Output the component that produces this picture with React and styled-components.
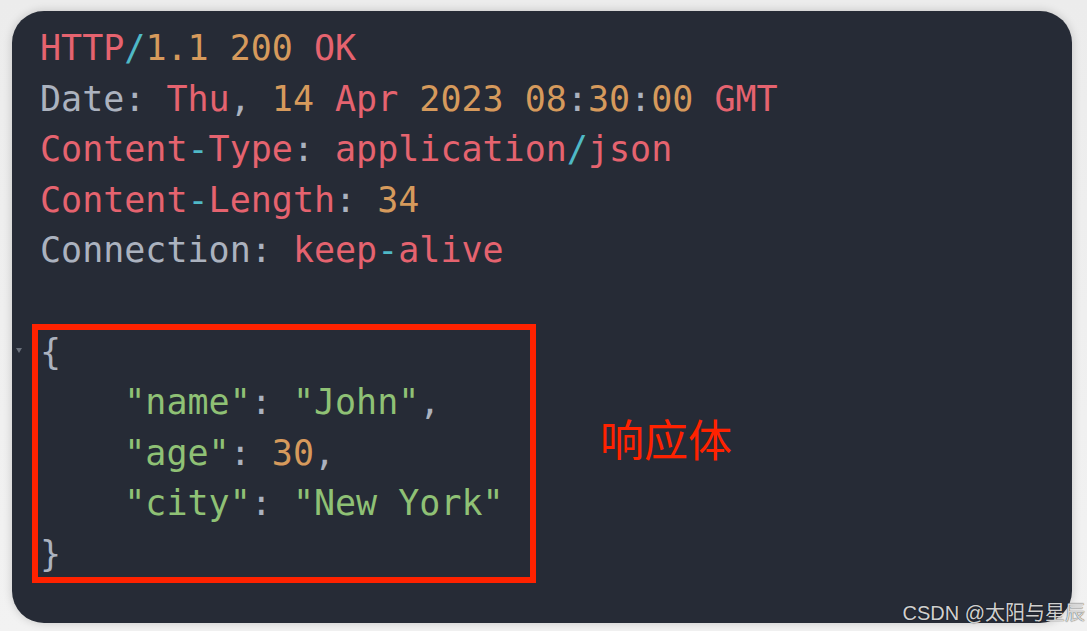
import React from 'react';
import styled, { createGlobalStyle } from 'styled-components';

const colors = {
  bg: '#262b36',
  red: '#e5636f',
  orange: '#d69a5c',
  cyan: '#4fb9c6',
  gray: '#abb2bf',
  green: '#8fc175',
  mark: '#ff2200',
};

const GlobalStyle = createGlobalStyle`
  html, body {
    margin: 0;
    padding: 0;
    background: #f0f0f0;
  }
  #root {
    width: 1087px;
    height: 631px;
    overflow: hidden;
  }
`;

const Page = styled.div`
  position: relative;
  width: 1087px;
  height: 631px;
  padding: 11px 15px 8px 12px;
  box-sizing: border-box;
  background: linear-gradient(to bottom, #ececec, #f2f2f2);
`;

const Panel = styled.div`
  height: 100%;
  box-sizing: border-box;
  padding: 12px 0 0 28px;
  background: ${colors.bg};
  border-radius: 32px;
  box-shadow: 0 0 10px rgba(0, 0, 0, 0.18);
  font-family: "DejaVu Sans Mono", "Liberation Mono", monospace;
  font-size: 35px;
  line-height: 50.6px;
  color: ${colors.gray};
`;

const Line = styled.div`
  height: 50.6px;
  white-space: pre;
`;

const Tok = styled.span`
  color: ${(p) => colors[p.c] || colors.gray};
`;

const BodyRow = styled.div`
  position: relative;
  display: flex;
  align-items: flex-start;
  gap: 64px;
  margin-left: -8px;
  margin-top: -3px;
`;

const BodyBox = styled.div`
  width: 504px;
  box-sizing: border-box;
  border: 6px solid ${colors.mark};
  padding-left: 2px;
`;

const BodyLines = styled.div`
  margin: -3px 0;
`;

const Fold = styled.div`
  position: absolute;
  left: -16px;
  top: 24px;
  width: 0;
  height: 0;
  border-left: 3px solid transparent;
  border-right: 3px solid transparent;
  border-top: 5px solid #6b717c;
`;

const Label = styled.div`
  margin-top: 89px;
  font-family: "Noto Sans CJK SC", "Noto Sans", sans-serif;
  font-size: 44px;
  line-height: 50px;
  color: ${colors.mark};
`;

const Watermark = styled.div`
  position: absolute;
  right: 2px;
  bottom: 5px;
  font-family: "Liberation Sans", "Noto Sans CJK SC", sans-serif;
  font-size: 20px;
  color: rgba(235, 235, 235, 0.9);
  text-shadow: 0 0 1px rgba(0, 0, 0, 0.6), 0 0 1px rgba(0, 0, 0, 0.4);
`;

const header = [
  [['HTTP', 'red'], ['/', 'cyan'], ['1.1 200', 'orange'], [' '], ['OK', 'red']],
  [['Date: '], ['Thu', 'red'], [', '], ['14', 'orange'], [' '], ['Apr', 'red'], [' '], ['2023 08', 'orange'], [':'], ['30', 'orange'], [':'], ['00', 'orange'], [' '], ['GMT', 'red']],
  [['Content', 'red'], ['-', 'cyan'], ['Type', 'red'], [': '], ['application', 'red'], ['/', 'cyan'], ['json', 'red']],
  [['Content', 'red'], ['-', 'cyan'], ['Length', 'red'], [': '], ['34', 'orange']],
  [['Connection: '], ['keep', 'red'], ['-', 'cyan'], ['alive', 'red']],
  [],
];

const body = [
  [['{']],
  [['    '], ['"name"', 'green'], [': '], ['"John"', 'green'], [',']],
  [['    '], ['"age"', 'green'], [': '], ['30', 'orange'], [',']],
  [['    '], ['"city"', 'green'], [': '], ['"New York"', 'green']],
  [['}']],
];

const renderLine = (tokens, i) => (
  <Line key={i}>
    {tokens.map(([text, c], j) => (
      <Tok key={j} c={c}>{text}</Tok>
    ))}
  </Line>
);

const App = () => (
  <>
    <GlobalStyle />
    <Page>
      <Panel>
        {header.map(renderLine)}
        <BodyRow>
          <Fold />
          <BodyBox>
            <BodyLines>{body.map(renderLine)}</BodyLines>
          </BodyBox>
          <Label>响应体</Label>
        </BodyRow>
      </Panel>
      <Watermark>CSDN @太阳与星辰</Watermark>
    </Page>
  </>
);

export default App;
